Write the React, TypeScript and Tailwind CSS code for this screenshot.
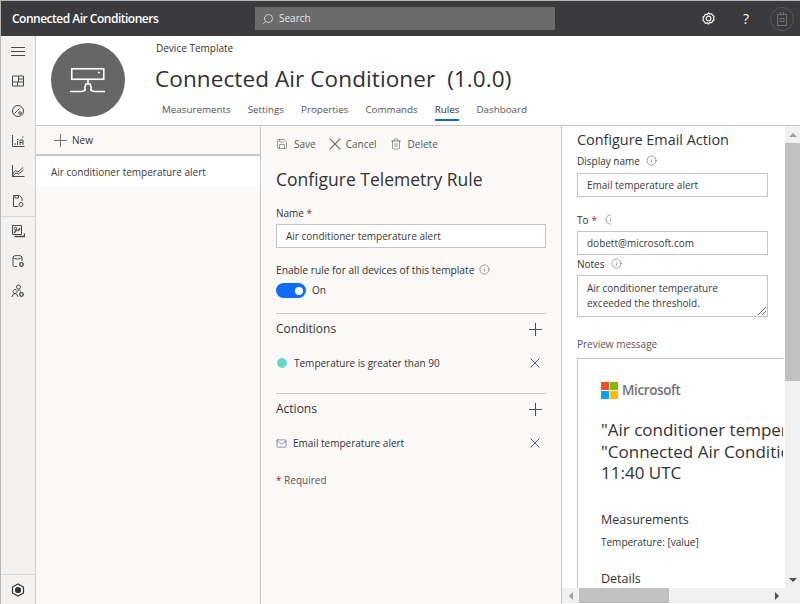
import { Save, Trash2, Mail, Info, Search } from 'lucide-react'

const tabs = ['Measurements', 'Settings', 'Properties', 'Commands', 'Rules', 'Dashboard']

function DeviceIcon() {
  return (
    <svg width="36" height="28" viewBox="0 0 36 28" fill="none" stroke="white" strokeWidth="1.6" className="mt-[1px]">
      <rect x="1.75" y="1.75" width="32" height="10.5" />
      <path d="M28 5.5h2" />
      <path d="M18 12v5" />
      <path d="M0 24.5h12l3-1v-4l1-2.5h4l1 2.5v4l3 1h11" />
    </svg>
  )
}

function PlusGlyph({ color = '#464775' }: { color?: string }) {
  return (
    <svg width="13" height="13" viewBox="0 0 13 13" fill="none" stroke={color} strokeWidth="1">
      <path d="M0 6.500h13M6.500 0v13" />
    </svg>
  )
}

function CrossGlyph({ size = 10, color = '#464775' }: { size?: number; color?: string }) {
  return (
    <svg width={size} height={size} viewBox="0 0 10 10" fill="none" stroke={color} strokeWidth="0.9">
      <path d="M.5.5l9 9M9.500.5l-9 9" />
    </svg>
  )
}

function RailGlyph({ children }: { children: React.ReactNode }) {
  return (
    <div className="h-[30px] flex items-center justify-center">
      <svg width="14" height="14" viewBox="0 0 14 14" fill="none" stroke="#4a4a4a" strokeWidth="1">
        {children}
      </svg>
    </div>
  )
}

function InfoDot({ className = '' }: { className?: string }) {
  return <Info className={`w-[11px] h-[11px] text-[#555] ${className}`} strokeWidth={1.2} />
}

function TextBox({ value, className = '' }: { value: string; className?: string }) {
  return (
    <div className={`h-6 border border-[#c4c4c4] bg-white pl-[9px] flex items-center text-[10px] text-[#3a3a3a] ${className}`}>
      {value}
    </div>
  )
}

export default function App() {
  return (
    <div
      className="w-[800px] h-[604px] overflow-hidden flex flex-col bg-white border-l border-t border-[#b5b5b5] text-[#333]"
      style={{ fontFamily: '"Open Sans", "Noto Sans", sans-serif' }}
    >
      {/* top bar */}
      <div className="h-[35px] shrink-0 bg-[#3b3a3d] flex items-center text-white pr-[6px]">
        <span className="w-[254px] pl-[11px] text-[12px] font-semibold tracking-[-0.5px]">Connected Air Conditioners</span>
        <div className="w-[300px] h-[23px] bg-[#6b6b6b] flex items-center pl-[7px] gap-[5px] text-[10px] text-[#e6e6e6]">
          <Search className="w-3 h-3 -scale-x-100" strokeWidth={1.5} />
          Search
        </div>
        <div className="flex-1" />
        <svg width="13" height="13" viewBox="0 0 14 14" fill="none" stroke="white" className="mr-[26px]">
          <path d="M7 1l1.500 1.200 2-.3.8 1.800 1.700 1-.5 2 .5 2-1.700 1-.8 1.800-2-.3L7 13l-1.500-1.200-2 .3-.8-1.800-1.700-1 .5-2-.5-2 1.700-1 .8-1.800 2 .3z" strokeWidth="1.200" />
          <circle cx="7" cy="7" r="2.500" strokeWidth="1.200" />
        </svg>
        <span className="text-[14px] leading-none text-white w-[10px] text-center">?</span>
        <div className="ml-[19px] w-6 h-6 rounded-full border border-[#5a5a5a] flex items-center justify-center">
          <svg width="10" height="14" viewBox="0 0 10 14" fill="none" stroke="#6f6f6f">
            <rect x="0.5" y="2.5" width="9" height="11" />
            <path d="M3.5 0v2.500M6.500 0v2.500M3 6.500h4v3H3z" />
          </svg>
        </div>
      </div>

      <div className="flex-1 flex min-h-0">
        {/* left rail */}
        <div className="w-[35px] shrink-0 bg-[#f3f2f1] border-r border-[#d0d0d0] flex flex-col">
          <RailGlyph><path d="M0 3.500h14M0 7.500h14M0 11.500h14" /></RailGlyph>
          <RailGlyph><path d="M1.500 2h11v10h-11zM1.500 8h11M6.500 8v4M7.500 2v6M7.500 5h5" /></RailGlyph>
          <RailGlyph>
            <circle cx="7" cy="7" r="5.500" />
            <path d="M3.500 9.500l3-3 2-2" />
            <circle cx="9" cy="9" r="1.300" />
          </RailGlyph>
          <RailGlyph><path d="M1.500 1v11.500h12M4 11V9M6.500 11V7M9 11V6h3v5M9 8.500h3M6 5.500h1.500M11 3h1.500" /></RailGlyph>
          <RailGlyph><path d="M1.500 1v11.500h12M1.500 10l3-3.500 2.500 1.500 5-4.500M1.500 12.500l3-3.500 3 1 5-4" /></RailGlyph>
          <RailGlyph>
            <path d="M7 12.500H2.500v-11h6l2.500 2.500v3M4 1.500v2.500h3.500v-2.500" />
            <circle cx="10" cy="10.500" r="2" />
          </RailGlyph>
          <div className="border-t border-[#d8d8d8] -mb-[1px]" />
          <RailGlyph>
            <path d="M1.500 1.500h9v9h-9z" />
            <path d="M3 9l3-3.500M7 7l2-3M3.500 12.500h10v-3" strokeWidth="1.400" />
            <circle cx="4.500" cy="4.500" r="1.300" />
          </RailGlyph>
          <RailGlyph>
            <path d="M6 12.500H3.500q-1.500 0-1.500-1.500V3q0-1.500 4.500-1.500T11 3v4" />
            <path d="M2 3.500q1 1.500 4.500 1.500T11 3.500" />
            <circle cx="10.500" cy="10.500" r="1.800" strokeWidth="1.300" />
          </RailGlyph>
          <RailGlyph>
            <circle cx="7.500" cy="3" r="2" />
            <path d="M4 5.500a2 2 0 1 0 .1 0zM1 13q.5-3.500 3-3.500T7 13M7 6q2 0 3 1.500" />
            <circle cx="10.500" cy="10.500" r="1.800" strokeWidth="1.300" />
          </RailGlyph>
          <div className="flex-1" />
          <div className="border-t border-[#d8d8d8] h-[30px] flex items-center justify-center">
            <svg width="14" height="14" viewBox="0 0 14 14" fill="none" stroke="#333" strokeWidth="1.200">
              <path d="M7 1l5.500 3v6L7 13l-5.500-3V4z" />
              <circle cx="7" cy="7" r="2.500" fill="#333" />
            </svg>
          </div>
        </div>

        <div className="flex-1 flex flex-col min-w-0">
          {/* template header */}
          <div className="h-[90px] shrink-0 flex border-b border-[#c8c8c8] pl-[15px]">
            <div className="w-[74px] h-[74px] mt-[7px] rounded-full bg-[#666] flex items-center justify-center">
              <DeviceIcon />
            </div>
            <div className="ml-[30px] flex flex-col">
              <div className="text-[10px] mt-[5px] leading-[15px] ml-[1px]">Device Template</div>
              <div className="text-[22.500px] leading-[30px] mt-[8px] tracking-[0.1px] text-[#2f2f2f] whitespace-pre">Connected Air Conditioner  (1.0.0)</div>
              <div className="flex gap-[17px] ml-[7px] mt-[9px] text-[9.800px] font-medium text-[#555]">
                {tabs.map(t => (
                  <span key={t} className={t === 'Rules' ? 'text-[#333] border-b-2 border-[#0f6cbd] h-[18px]' : ''}>{t}</span>
                ))}
              </div>
            </div>
          </div>

          <div className="flex-1 flex min-h-0">
            {/* rule list */}
            <div className="w-[225px] shrink-0 bg-[#faf9f8] border-r border-[#c8c8c8]">
              <div className="h-[30px] pt-[1px] border-b-2 border-[#c8c8c8] flex items-center pl-[18px] gap-[5px] text-[10px]">
                <PlusGlyph color="#777" />
                New
              </div>
              <div className="h-[30px] mt-[1px] bg-white flex items-center pl-[15px] text-[10px] text-[#3a3a3a]">
                Air conditioner temperature alert
              </div>
            </div>

            {/* telemetry rule form */}
            <div className="w-[301px] shrink-0 bg-[#faf9f8] border-r border-[#c8c8c8] pl-[15px] pr-[15px]">
              <div className="flex items-center h-[36px] text-[10px] text-[#555]">
                <Save className="w-3 h-3 mr-[6px]" strokeWidth={1.2} />
                <span className="mr-[13px]">Save</span>
                <CrossGlyph size={12} color="#666" />
                <span className="ml-[5px] mr-[13px]">Cancel</span>
                <Trash2 className="w-3 h-3 mr-[6px]" strokeWidth={1.2} />
                <span>Delete</span>
              </div>
              <h1 className="text-[17.500px] font-medium leading-[22px] mt-[6px] text-[#333]">Configure Telemetry Rule</h1>
              <div className="text-[10px] mt-[16px] leading-[15px]">Name <span className="text-[#a4262c]">*</span></div>
              <TextBox value="Air conditioner temperature alert" className="mt-[3px]" />
              <div className="flex items-center gap-[5px] text-[10.200px] mt-[15px] leading-[15px]">
                Enable rule for all devices of this template
                <InfoDot className="-mt-[2px]" />
              </div>
              <div className="flex items-center gap-[6px] mt-[5px] text-[10px]">
                <div className="w-[30px] h-[15px] rounded-full bg-[#0f6cfd] flex items-center justify-end pr-[3px]">
                  <div className="w-[8px] h-[8px] rounded-full bg-white" />
                </div>
                On
              </div>

              <div className="border-t border-[#c8c8c8] mt-[15px] pt-[7px] flex items-center justify-between pr-[4px]">
                <span className="text-[12px] font-medium leading-[16px]">Conditions</span>
                <PlusGlyph />
              </div>
              <div className="flex items-center mt-[18px] text-[10px] pr-[6px] h-[16px]">
                <div className="w-[10px] h-[10px] rounded-full bg-[#69d5cb] ml-[1px] mr-[7px]" />
                <span className="flex-1">Temperature is greater than 90</span>
                <CrossGlyph />
              </div>

              <div className="border-t border-[#c8c8c8] mt-[22px] pt-[7px] flex items-center justify-between pr-[4px]">
                <span className="text-[12px] font-medium leading-[16px]">Actions</span>
                <PlusGlyph />
              </div>
              <div className="flex items-center mt-[18px] text-[10px] pr-[6px] h-[16px]">
                <Mail className="w-[11px] h-[11px] mr-[6px] text-[#464775]" strokeWidth={1.2} />
                <span className="flex-1">Email temperature alert</span>
                <CrossGlyph />
              </div>
              <div className="text-[10px] mt-[22px] text-[#555]"><span className="text-[#a4262c]">*</span> Required</div>
            </div>

            {/* email action pane */}
            <div className="flex-1 min-w-0 flex flex-col bg-white">
              <div className="flex-1 min-h-0 flex">
                <div className="flex-1 min-w-0 overflow-hidden pl-[15px] pr-[15px] border-r-2 border-white">
                  <h2 className="text-[14.400px] leading-[18px] mt-[5px] text-[#333]">Configure Email Action</h2>
                  <div className="flex items-center gap-[6px] text-[10px] leading-[15px] mt-[5px]">Display name <InfoDot className="-mt-[2px]" /></div>
                  <TextBox value="Email temperature alert" className="mt-[4px]" />
                  <div className="flex items-center gap-[6px] text-[10px] leading-[15px] mt-[16px]">
                    To <span className="text-[#a4262c] -ml-[3px]">*</span>
                    <span className="w-[6px] overflow-hidden ml-[2px] -mt-[2px]"><InfoDot /></span>
                  </div>
                  <TextBox value="dobett@microsoft.com" className="mt-[3px]" />
                  <div className="flex items-center gap-[6px] text-[10px] leading-[15px] mt-[2px]">Notes <InfoDot className="-mt-[2px]" /></div>
                  <div className="relative h-[42px] border border-[#c4c4c4] mt-[3px] pl-[9px] pt-[5px] text-[10px] leading-[15px] text-[#3a3a3a]">
                    Air conditioner temperature<br />exceeded the threshold.
                    <svg className="absolute right-0 bottom-0" width="10" height="10" viewBox="0 0 10 10" stroke="#666" strokeWidth="1">
                      <path d="M1 9l8-8M5 9l4-4" />
                    </svg>
                  </div>
                  <div className="text-[10px] leading-[15px] mt-[20px] text-[#555]">Preview message</div>

                  <div className="mt-[6px] border-l border-t border-[#c4c4c4] w-[400px] h-[300px] pl-[23px] pt-[21px]">
                    <div className="flex items-center gap-[4px]">
                      <div className="grid grid-cols-2 gap-[1px] w-[17px] h-[17px] shrink-0">
                        <div className="bg-[#f25022]" />
                        <div className="bg-[#7fba00]" />
                        <div className="bg-[#00a4ef]" />
                        <div className="bg-[#ffb900]" />
                      </div>
                      <span className="text-[13.500px] font-semibold text-[#737373] tracking-[-0.4px]">Microsoft</span>
                    </div>
                    <div className="text-[17px] leading-[21.500px] mt-[19px] text-[#333] whitespace-nowrap">
                      "Air conditioner temperature alert"<br />"Connected Air Conditioner"<br />11:40 UTC
                    </div>
                    <div className="text-[12.500px] font-medium mt-[27px] leading-[18px]">Measurements</div>
                    <div className="text-[10px] mt-[6px] leading-[15px]">Temperature: [value]</div>
                    <div className="text-[12.500px] font-medium mt-[20px] leading-[18px]">Details</div>
                  </div>
                </div>

                {/* vertical scrollbar */}
                <div className="w-[15px] shrink-0 bg-[#f0f0f0] flex flex-col items-center">
                  <div className="h-[17px] flex items-center justify-center shrink-0">
                    <div className="w-0 h-0 border-x-[4px] border-x-transparent border-b-[4px] border-b-[#a0a0a0]" />
                  </div>
                  <div className="w-full h-[238px] bg-[#c0c0c0]" />
                  <div className="flex-1" />
                  <div className="h-[17px] flex items-center justify-center shrink-0">
                    <div className="w-0 h-0 border-x-[4px] border-x-transparent border-t-[4px] border-t-[#505050]" />
                  </div>
                </div>
              </div>

              {/* horizontal scrollbar */}
              <div className="h-[15px] shrink-0 bg-[#f0f0f0] flex items-center mb-[1px]">
                <div className="w-[17px] flex justify-center shrink-0">
                  <div className="w-0 h-0 border-y-[4px] border-y-transparent border-r-[4px] border-r-[#a0a0a0]" />
                </div>
                <div className="h-full w-[90px] bg-[#c0c0c0]" />
                <div className="flex-1" />
                <div className="w-[17px] flex justify-center shrink-0 mr-[15px]">
                  <div className="w-0 h-0 border-y-[4px] border-y-transparent border-l-[4px] border-l-[#505050]" />
                </div>
              </div>
            </div>
          </div>
        </div>
      </div>
    </div>
  )
}
